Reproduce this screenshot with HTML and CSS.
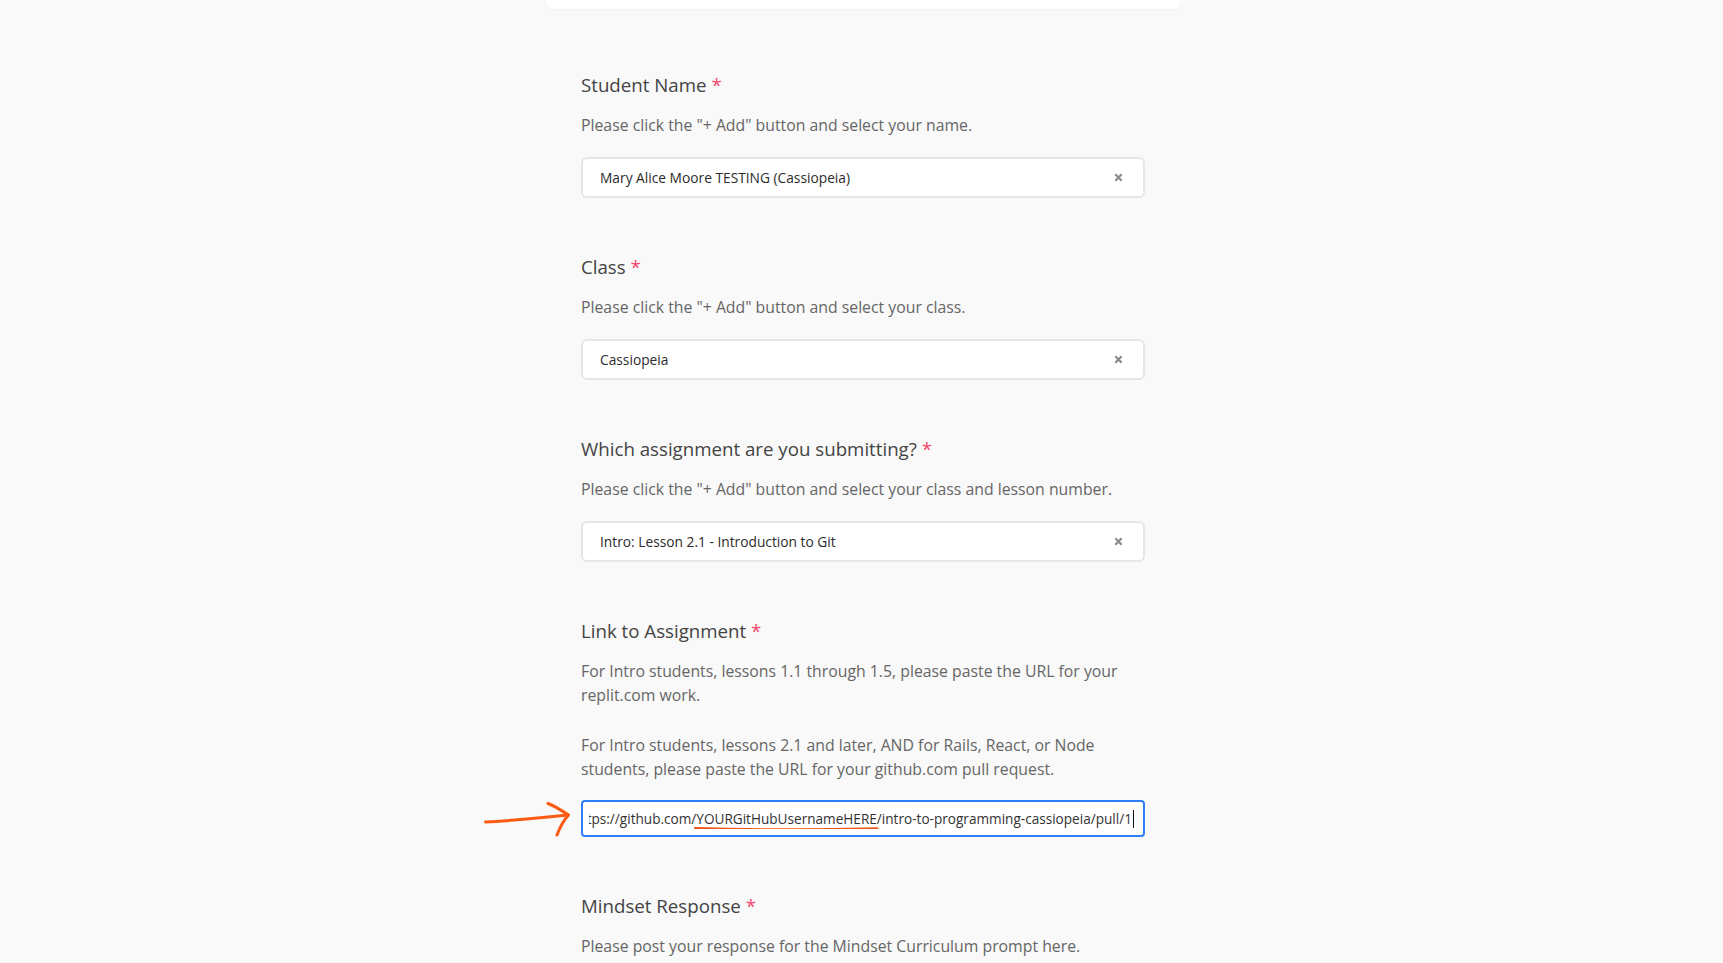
FILE: index.html
```html
<!DOCTYPE html>
<html lang="en">
<head>
<meta charset="utf-8">
<title>Assignment Submission</title>
<link rel="stylesheet" href="styles.css">
</head>
<body>
<div class="page">
  <div class="card-tail"></div>
  <form class="form">
    <section class="field-group">
      <h2 class="label">Student Name <span class="req">*</span></h2>
      <p class="desc">Please click the "+ Add" button and select your name.</p>
      <div class="select">
        <span class="select-value">Mary Alice Moore TESTING (Cassiopeia)</span>
        <svg class="clear" viewBox="0 0 10 10" width="10" height="10"><path d="M1.5 1.5 L8.5 8.5 M8.5 1.5 L1.5 8.5"/></svg>
      </div>
    </section>

    <section class="field-group">
      <h2 class="label">Class <span class="req">*</span></h2>
      <p class="desc">Please click the "+ Add" button and select your class.</p>
      <div class="select">
        <span class="select-value">Cassiopeia</span>
        <svg class="clear" viewBox="0 0 10 10" width="10" height="10"><path d="M1.5 1.5 L8.5 8.5 M8.5 1.5 L1.5 8.5"/></svg>
      </div>
    </section>

    <section class="field-group">
      <h2 class="label">Which assignment are you submitting? <span class="req">*</span></h2>
      <p class="desc">Please click the "+ Add" button and select your class and lesson number.</p>
      <div class="select">
        <span class="select-value">Intro: Lesson 2.1 - Introduction to Git</span>
        <svg class="clear" viewBox="0 0 10 10" width="10" height="10"><path d="M1.5 1.5 L8.5 8.5 M8.5 1.5 L1.5 8.5"/></svg>
      </div>
    </section>

    <section class="field-group">
      <h2 class="label">Link to Assignment <span class="req">*</span></h2>
      <div class="desc">
        <p class="para">For Intro students, lessons 1.1 through 1.5, please paste the URL for your replit.com work.</p>
        <p class="para para-next">For Intro students, lessons 2.1 and later, AND for Rails, React, or Node students, please paste the URL for your github.com pull request.</p>
      </div>
      <div class="url-input">
        <svg class="arrow" viewBox="0 0 92 40" width="92" height="40">
          <path d="M1.5 22 C 25 21, 55 18, 84 15"/>
          <path d="M64 3.5 C 68 5, 74 8, 84.5 15 C 79 21, 76 27, 73 35"/>
        </svg>
        <div class="url-text"><span class="url-inner">https://github.com/<span class="mark">YOURGitHubUsernameHERE<svg class="underline" viewBox="0 0 100 4" preserveAspectRatio="none"><path d="M0.5 1.2 Q 50 3.6 99.5 1.4"/></svg></span>/intro-to-programming-cassiopeia/pull/1</span><span class="caret"></span></div>
      </div>
    </section>

    <section class="field-group">
      <h2 class="label">Mindset Response <span class="req">*</span></h2>
      <p class="desc">Please post your response for the Mindset Curriculum prompt here.</p>
    </section>
  </form>
</div>
</body>
</html>
```

FILE: styles.css
```css
html, body {
  margin: 0;
  padding: 0;
  background: #f9f9f9;
  font-family: "Open Sans", "Noto Sans", sans-serif;
  overflow: hidden;
}

body {
  padding-left: 3px;
}

.page {
  width: 634px;
  margin: 0 auto;
}

.card-tail {
  height: 9px;
  background: #ffffff;
  border-radius: 0 0 7px 7px;
  box-shadow: 0 1px 2px rgba(0, 0, 0, 0.03);
}

.form {
  padding: 64px 35px 0 35px;
  display: flex;
  flex-direction: column;
  gap: 57px;
}

.field-group {
  display: flex;
  flex-direction: column;
}

.label {
  margin: 0;
  font-size: 18.7px;
  line-height: 24px;
  font-weight: 400;
  color: #444444;
}

.req {
  color: #f4476b;
}

.desc {
  margin: 16px 0 0 0;
  font-size: 15.8px;
  line-height: 24px;
  color: #666666;
}

.para {
  margin: 0;
}

.para-next {
  margin-top: 26px;
}

.select {
  margin-top: 20px;
  height: 41px;
  box-sizing: border-box;
  background: #ffffff;
  border: 2px solid #e6e6e6;
  border-radius: 6px;
  display: flex;
  align-items: center;
  justify-content: space-between;
  padding: 0 20px 0 17px;
}

.select-value {
  font-size: 13.75px;
  color: #2b2b2b;
}

.clear {
  width: 9px;
  height: 9px;
  fill: none;
  stroke: #8a8a8a;
  stroke-width: 2.4;
}

.url-input {
  position: relative;
  margin-top: 19px;
  height: 37px;
  box-sizing: border-box;
  background: #ffffff;
  border: 2px solid #2d7ff9;
  border-radius: 4px;
  display: flex;
  align-items: center;
  padding: 0 9px 0 6px;
}

.url-text {
  flex: 1;
  display: flex;
  justify-content: flex-end;
  align-items: center;
  overflow: hidden;
  white-space: nowrap;
  font-size: 13.6px;
  line-height: 20px;
  color: #333333;
}

.url-inner {
  flex-shrink: 0;
}

.mark {
  position: relative;
}

.underline {
  position: absolute;
  left: -1px;
  right: -1px;
  bottom: -3px;
  height: 4px;
  width: calc(100% + 2px);
  fill: none;
  stroke: #f0561b;
  stroke-width: 2.2;
  stroke-linecap: round;
  vector-effect: non-scaling-stroke;
  overflow: visible;
}

.caret {
  flex-shrink: 0;
  width: 1px;
  height: 18px;
  margin-left: 1px;
  background: #111111;
}

.arrow {
  position: absolute;
  left: -99px;
  top: -2px;
  fill: none;
  stroke: #fc5a12;
  stroke-width: 3;
  stroke-linecap: round;
  stroke-linejoin: round;
}
```
